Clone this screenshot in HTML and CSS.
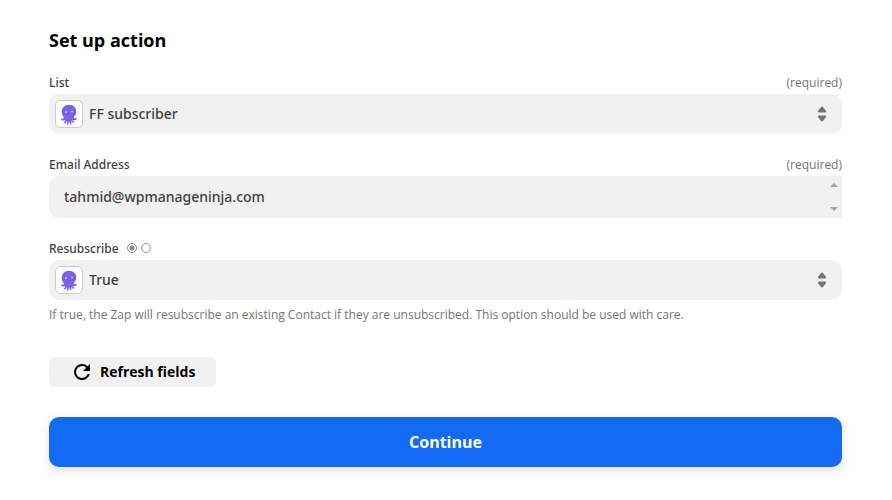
FILE: index.html
```html
<!DOCTYPE html>
<html lang="en">
<head>
    <meta charset="UTF-8">
    <meta name="viewport" content="width=device-width, initial-scale=1.0">
    <title>Set up action</title>
    <link rel="stylesheet" href="styles.css">
</head>
<body>
    <!-- Shared icons -->
    <svg class="sprite" aria-hidden="true">
        <symbol id="octopus" viewBox="2 1 24 24">
            <path fill="#7b61e8" d="M14 4.500c-4 0-6.700 2.700-6.700 6.400 0 2.200.8 3.700 1.800 5.100.3.700.1 1.300-.7 1.300-.6 0-.9-.3-1.300-.1-.7.300-.4 1.400.9 1.700 1 .2 1.900 0 2.500-.4.200.9-.5 1.500-.9 2.100-.4.900.5 1.500 1.200.9.700-.7 1.100-1.500 1.300-2.200.3.900.1 1.900-.1 2.700-.1 1.100 1.200 1.200 1.500.1.300-.9.300-1.800.4-2.700.5.800.8 1.800 1 2.700.3.900 1.500.6 1.400-.4-.1-.9-.3-1.600-.5-2.300.8.800 1.300 1.500 2.300 1.700 1 .1 1.200-.9.400-1.300-.7-.4-1.200-.8-1.300-1.500 1 .5 2.500.6 3.400-.1.900-.7.600-1.700-.1-1.600-.6.200-1.100.4-1.700.1-.6-.4-.3-1.100.2-1.800 1.200-1.400 1.700-2.300 1.700-4.200 0-3.600-2.700-6.200-6.700-6.200z"/>
            <circle cx="11.200" cy="11.200" r=".9" fill="#c9c0f8"/>
            <circle cx="16.800" cy="10.800" r=".9" fill="#c9c0f8"/>
            <path d="M12.500 13.200q1.600.9 3-.1" fill="none" stroke="#6a50d8" stroke-width=".7"/>
        </symbol>
        <symbol id="arrows" viewBox="0 0 10 16">
            <path fill="#757575" d="M5 .5c.5 0 .8.300 1.200.8L8.900 4.800c.5.700.2 1.600-.7 1.600H1.800C.900 6.400.6 5.500 1.100 4.800L3.800 1.300C4.200.8 4.500.5 5 .5zM5 15.500c.5 0 .8-.3 1.200-.8l2.700-3.500c.5-.7.200-1.600-.7-1.600H1.800c-.9 0-1.200.9-.7 1.600l2.700 3.500c.4.500.7.800 1.200.8z"/>
        </symbol>
    </svg>

    <form class="action-form">
        <h1 class="title">Set up action</h1>

        <div class="field">
            <div class="field-head">
                <label for="list">List</label>
                <span class="required">(required)</span>
            </div>
            <div class="select-box">
                <select id="list" name="list">
                    <option>FF subscriber</option>
                </select>
                <svg class="app-icon" aria-hidden="true"><use href="#octopus"/></svg>
                <svg class="arrows" aria-hidden="true"><use href="#arrows"/></svg>
            </div>
        </div>

        <div class="field">
            <div class="field-head">
                <label for="email">Email Address</label>
                <span class="required">(required)</span>
            </div>
            <div class="text-box">
                <textarea id="email" name="email" rows="1" spellcheck="false">tahmid@wpmanageninja.com</textarea>
                <div class="scroller" aria-hidden="true">
                    <svg width="8" height="4" viewBox="0 0 8 4"><path d="M4 0l4 4H0z"/></svg>
                    <svg width="8" height="4" viewBox="0 0 8 4"><path d="M4 4l4-4H0z"/></svg>
                </div>
            </div>
        </div>

        <div class="field">
            <div class="field-head">
                <label for="resubscribe">Resubscribe</label>
                <div class="modes">
                    <input type="radio" name="mode" aria-label="Choose a value" checked>
                    <input type="radio" name="mode" aria-label="Custom value">
                </div>
            </div>
            <div class="select-box">
                <select id="resubscribe" name="resubscribe">
                    <option>True</option>
                    <option>False</option>
                </select>
                <svg class="app-icon" aria-hidden="true"><use href="#octopus"/></svg>
                <svg class="arrows" aria-hidden="true"><use href="#arrows"/></svg>
            </div>
            <p class="help">If true, the Zap will resubscribe an existing Contact if they are unsubscribed. This option should be used with care.</p>
        </div>

        <button type="button" class="refresh-btn">
            <svg width="24" height="24" viewBox="0 0 24 24" aria-hidden="true">
                <path d="M17.650 6.350A7.960 7.960 0 0 0 12 4a8 8 0 1 0 7.730 10h-2.080A6 6 0 1 1 12 6c1.660 0 3.140.69 4.220 1.780L13 11h7V4l-2.350 2.350z"/>
            </svg>
            Refresh fields
        </button>

        <button type="submit" class="continue-btn">Continue</button>
    </form>
</body>
</html>
```

FILE: styles.css
```css
* {
    box-sizing: border-box;
}

body {
    margin: 0;
    background: #fff;
    color: #403f3e;
    font-family: 'Open Sans', 'Noto Sans', sans-serif;
    font-size: 12px;
    line-height: 18px;
}

button,
select,
textarea {
    font-family: inherit;
    border: none;
}

.sprite {
    position: absolute;
    width: 0;
    height: 0;
}

.action-form {
    padding: 28px 50px 32px 49px;
}

.title {
    margin: 0 0 22px;
    color: #000;
    font-size: 18px;
    font-weight: 700;
    line-height: 24px;
}

.field {
    margin-bottom: 22px;
}

.field-head {
    display: flex;
    align-items: center;
    margin-bottom: 2px;
}

.field-head label {
    font-family: 'Noto Sans', sans-serif;
    font-weight: 500;
}

.required {
    margin-left: auto;
    color: #757575;
}

/* Drop-downs */
.select-box {
    position: relative;
}

.select-box select {
    appearance: none;
    display: block;
    width: 100%;
    height: 40px;
    padding: 0 40px 2px;
    border-radius: 10px;
    background: #f1f1f1;
    color: #403f3e;
    font-family: 'Noto Sans', sans-serif;
    font-size: 14px;
    font-weight: 500;
}

.app-icon,
.arrows {
    position: absolute;
    pointer-events: none;
}

.app-icon {
    top: 6px;
    left: 6px;
    width: 28px;
    height: 28px;
    border: 1px solid #ccc;
    border-radius: 5px;
    background: #fff;
}

.arrows {
    top: 12px;
    right: 15px;
    width: 10px;
    height: 16px;
}

/* Email text box */
.text-box {
    display: flex;
    border-radius: 10px 0 0 10px;
    background: #f1f1f1;
    overflow: hidden;
}

.text-box textarea {
    flex: 1;
    height: 42px;
    padding: 11px 15px;
    background: transparent;
    color: #403f3e;
    font-family: 'Noto Sans', sans-serif;
    font-size: 14px;
    font-weight: 500;
    line-height: 20px;
    resize: none;
    overflow: hidden;
}

.scroller {
    display: flex;
    flex-direction: column;
    align-items: center;
    justify-content: space-between;
    width: 17px;
    padding: 7px 0;
    fill: #a3a3a3;
}

.modes {
    display: flex;
    gap: 4px;
    margin-left: 8px;
    padding-bottom: 2px;
}

.modes input {
    appearance: none;
    width: 10px;
    height: 10px;
    margin: 0;
    border: 1px solid #919191;
    border-radius: 50%;
}

.modes input:checked {
    background: radial-gradient(circle, #8a8a8a 2px, #fff 3px);
}

.help {
    margin: 6px 0 0;
    color: #757575;
}

/* Buttons */
.refresh-btn {
    display: flex;
    align-items: center;
    gap: 6px;
    height: 30px;
    margin-top: 33px;
    padding: 0 21px 1px;
    border-radius: 6px;
    background: #f1f1f1;
    color: #000;
    font-size: 14px;
    font-weight: 700;
    cursor: pointer;
}

.continue-btn {
    display: block;
    width: 100%;
    height: 50px;
    margin-top: 30px;
    border-radius: 10px;
    background: #136bf5;
    box-shadow: 0 4px 12px rgba(0, 0, 0, 0.12);
    color: #fff;
    font-size: 16px;
    font-weight: 700;
    cursor: pointer;
}
```
